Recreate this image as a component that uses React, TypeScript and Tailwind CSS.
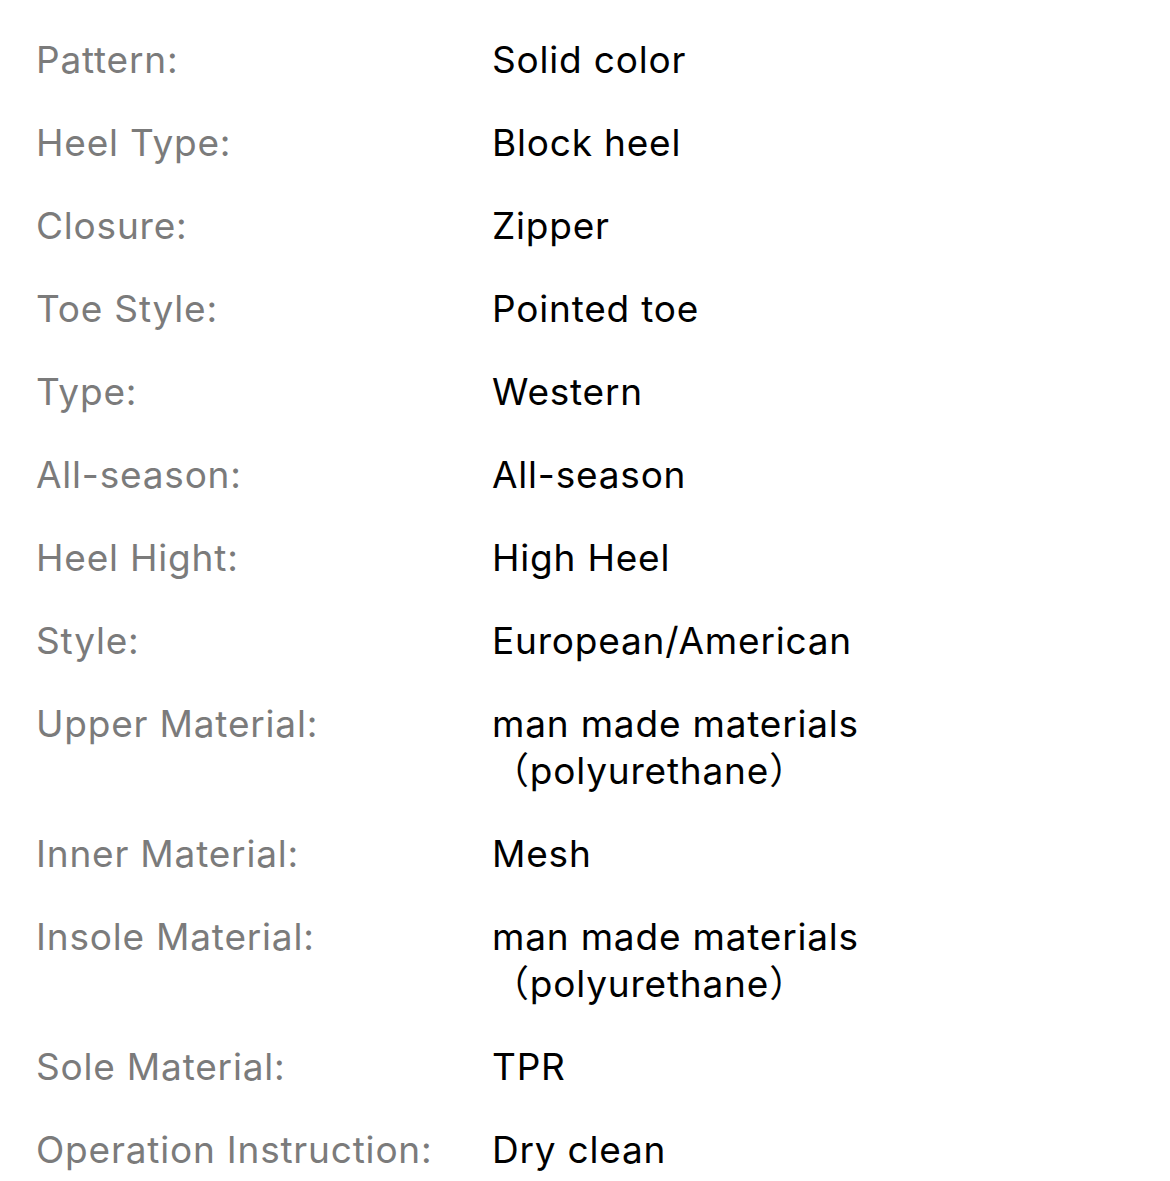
import React from "react";

const rows: [string, string][] = [
  ["Pattern:", "Solid color"],
  ["Heel Type:", "Block heel"],
  ["Closure:", "Zipper"],
  ["Toe Style:", "Pointed toe"],
  ["Type:", "Western"],
  ["All-season:", "All-season"],
  ["Heel Hight:", "High Heel"],
  ["Style:", "European/American"],
  ["Upper Material:", "man made materials（polyurethane）"],
  ["Inner Material:", "Mesh"],
  ["Insole Material:", "man made materials（polyurethane）"],
  ["Sole Material:", "TPR"],
  ["Operation Instruction:", "Dry clean"],
];

export default function App() {
  return (
    <div
      className="w-[1170px] min-h-[1181px] bg-white pt-[18px] pl-[36px]"
      style={{ fontFamily: 'Inter, "Noto Sans CJK SC", sans-serif' }}
    >
      {rows.map(([k, v]) => (
        <div key={k} className="flex py-[18px] text-[37px] leading-[47px] tracking-[0.8px]">
          <div className="w-[456px] shrink-0 text-[#7b7b7b]">{k}</div>
          <div className="w-[410px] text-black">{v}</div>
        </div>
      ))}
    </div>
  );
}
